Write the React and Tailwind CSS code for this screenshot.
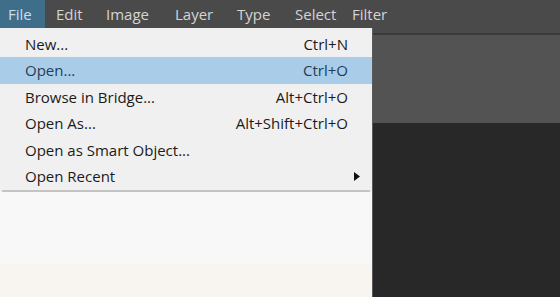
import React from 'react';

const items = [
  { label: 'New...', key: 'Ctrl+N' },
  { label: 'Open...', key: 'Ctrl+O', active: true },
  { label: 'Browse in Bridge...', key: 'Alt+Ctrl+O' },
  { label: 'Open As...', key: 'Alt+Shift+Ctrl+O' },
  { label: 'Open as Smart Object...' },
  { label: 'Open Recent', sub: true },
];

const menus = [
  { label: 'File', w: 'w-[45px]' },
  { label: 'Edit', w: 'w-[50px]' },
  { label: 'Image', w: 'w-[69px]' },
  { label: 'Layer', w: 'w-[62px]' },
  { label: 'Type', w: 'w-[58px]' },
  { label: 'Select', w: 'w-[57px]' },
  { label: 'Filter', w: 'w-[60px]' },
];

const App = () => {
  return (
    <div className="w-[560px] h-[297px] overflow-hidden bg-[#282828] flex flex-col font-['Open_Sans',sans-serif]">
      {/* menu bar */}
      <div className="h-[28px] bg-[#4a4a4a] flex items-stretch text-[15px] text-[#d4d4d4] shrink-0">
        {menus.map((m, i) => (
          <div
            key={m.label}
            className={
              i === 0
                ? 'w-[45px] bg-[#3f6e8b] text-[#cfdde6] pl-[8px] flex items-center'
                : m.w + ' pl-[11px] flex items-center'
            }
          >
            {m.label}
          </div>
        ))}
      </div>

      <div className="flex flex-1">
        {/* dropdown */}
        <div className="w-[373px] flex flex-col bg-[#f0f0f0] border-r border-[#5a5a5a]">
          <div className="pt-[3px] text-[15px] text-[#1b1b1b]">
            {items.map((it) => (
              <div
                key={it.label}
                className={
                  it.active
                    ? 'h-[26.4px] bg-[#a9cde8] text-[#1f3e58] flex items-center pl-[25px] pr-[24px]'
                    : 'h-[26.4px] flex items-center pl-[25px] pr-[24px]'
                }
              >
                <span className="flex-1">{it.label}</span>
                {it.key && <span>{it.key}</span>}
                {it.sub && (
                  <svg width="6" height="9" viewBox="0 0 6 9" className="mr-[-12px]">
                    <path d="M0 0 L6 4.5 L0 9 Z" fill="#111" />
                  </svg>
                )}
              </div>
            ))}
          </div>
          <div className="mt-[1px] mx-[2px] h-[2px] bg-[#c4c4c4]" />
          <div className="h-[72px] bg-[#f8f8f8]" />
          <div className="flex-1 bg-[#f8f4ef]" />
        </div>

        {/* workspace */}
        <div className="flex-1 flex flex-col">
          <div className="h-[5px] bg-[#4a4a4a]" />
          <div className="h-[2px] bg-[#3a3a3a]" />
          <div className="h-[88px] bg-[#535353]" />
          <div className="flex-1 bg-[#282828]" />
        </div>
      </div>
    </div>
  );
};

export default App;
